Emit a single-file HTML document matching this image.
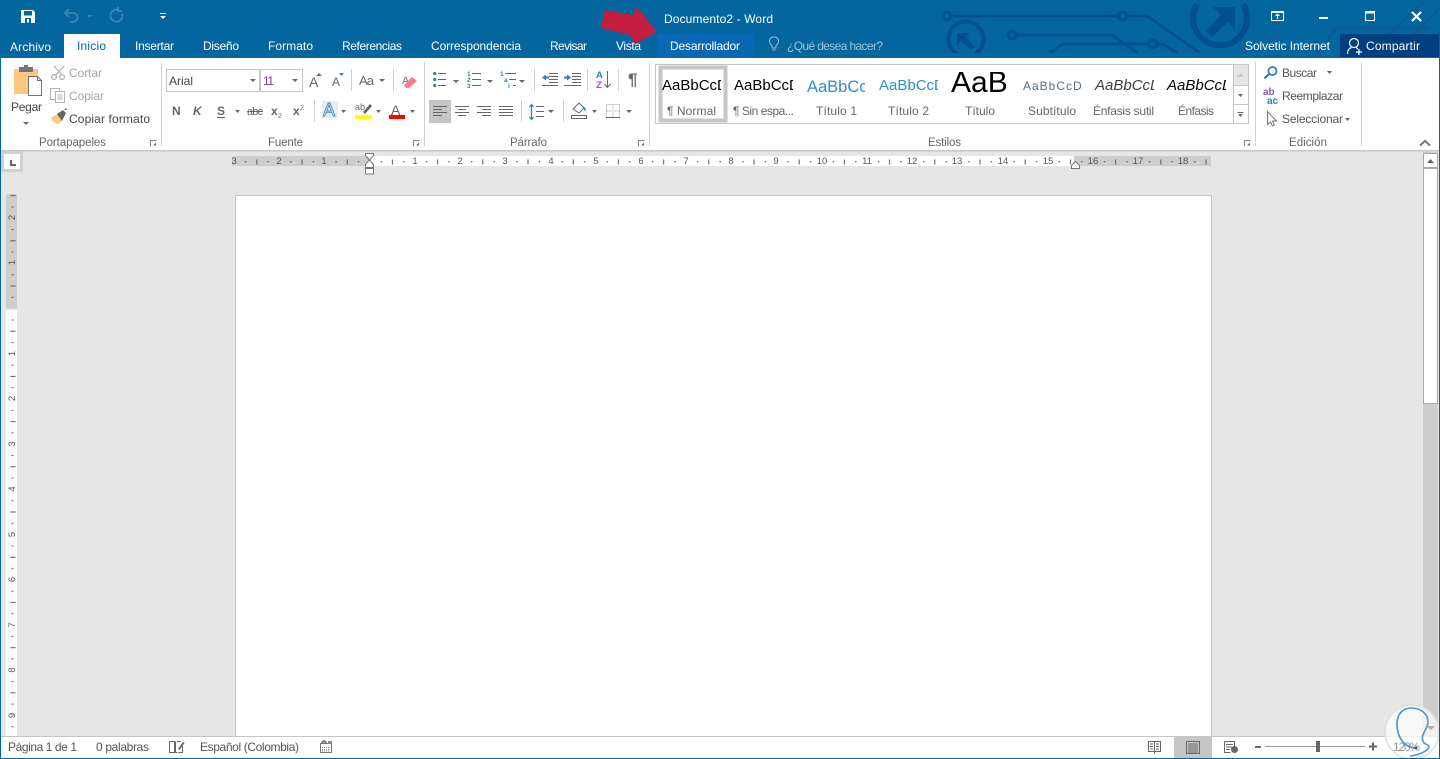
<!DOCTYPE html>
<html lang="es"><head><meta charset="utf-8"><title>Documento2 - Word</title>
<style>
html,body{margin:0;padding:0;width:1440px;height:759px;overflow:hidden;background:#e6e6e6}
svg{display:block;font-family:"Liberation Sans",sans-serif}
.t{font-size:12px;fill:#fff}
.r{font-size:12px;fill:#444}
.d{font-size:12px;fill:#a6a6a6}
.l{font-size:11.5px;fill:#666}
.s{font-size:12px;fill:#666}
.n{font-size:9.5px;fill:#555;text-anchor:middle}
.b{font-weight:bold;font-size:12px;fill:#666}
</style></head><body>
<svg width="1440" height="759" viewBox="0 0 1440 759" xmlns="http://www.w3.org/2000/svg">
<defs>
<pattern id="hr" patternUnits="userSpaceOnUse" x="369.7" y="156" width="45.2" height="10"><rect x="11" y="5" width="1.2" height="1.4" fill="#555"/><rect x="22.2" y="3.5" width="1" height="5" fill="#555"/><rect x="33.5" y="5" width="1.2" height="1.4" fill="#555"/></pattern>
<pattern id="vr" patternUnits="userSpaceOnUse" x="6" y="308.5" width="11" height="45.2"><rect x="5.5" y="11" width="2" height="1" fill="#555"/><rect x="4.5" y="22.2" width="5" height="1" fill="#555"/><rect x="5.5" y="33.5" width="2" height="1" fill="#555"/></pattern>
<clipPath id="tb"><rect x="900" y="1" width="540" height="52"/></clipPath>
<clipPath id="c1"><rect x="660" y="70" width="61" height="30"/></clipPath>
<clipPath id="c2"><rect x="732" y="70" width="61" height="30"/></clipPath>
<clipPath id="c3"><rect x="804" y="70" width="61" height="30"/></clipPath>
<clipPath id="c4"><rect x="876" y="70" width="62" height="30"/></clipPath>
<clipPath id="c5"><rect x="945" y="72" width="66" height="30"/></clipPath>
<clipPath id="c6"><rect x="1020" y="70" width="62" height="30"/></clipPath>
<clipPath id="c7"><rect x="1092" y="70" width="62" height="30"/></clipPath>
<clipPath id="c8"><rect x="1164" y="70" width="62" height="30"/></clipPath>
</defs>

<!-- base -->
<rect width="1440" height="759" fill="#e6e6e6"/>
<rect width="1440" height="58" fill="#03669f"/>

<!-- title pattern -->
<g clip-path="url(#tb)" fill="none" stroke="#014f8f" stroke-width="3">
<path d="M951 16H1119M1127 16H1147L1200 53"/><circle cx="947" cy="16" r="4"/><circle cx="1123" cy="16" r="4"/>
<path d="M1016 35H1112L1138 53"/><circle cx="1012" cy="35" r="4"/>
<path d="M1050 53L1063 44H1149M1157 44H1163L1177 53"/><circle cx="1153" cy="44" r="4"/>
<circle cx="966" cy="39" r="17.5" stroke-width="4"/>
<path d="M1197 4A27 27 0 1 0 1243 4" stroke-width="6"/>
<path d="M957 33H970L966 37L975 47L971 50L961 41L957 46Z" fill="#014f8f" stroke="none"/>
<path d="M1213 7H1235V29L1228 22L1212 37L1206 31L1221 15Z" fill="#014f8f" stroke="none"/>
<path d="M1317 53L1337 28H1430" stroke="#0b5b96"/><path d="M1383 40L1425 0M1408 40L1440 8" stroke="#0b5b96"/>
</g>

<!-- QAT -->
<path d="M21 10h12l2 2v11H21z" fill="#fff"/><rect x="24" y="11" width="8" height="4.5" fill="#03669f"/><rect x="25" y="18" width="6" height="5" fill="#03669f"/><rect x="27" y="19" width="2" height="3.5" fill="#fff"/>
<g fill="none" stroke="#3c86b6" stroke-width="1.8"><path d="M66 13h7a4.5 4.5 0 0 1 0 9h-3"/><path d="M69 9l-4 4 4 4"/><path d="M122 13.5a6 6 0 1 1-3.5-3.5"/><path d="M118 7v4h4"/></g>
<path d="M87 15h5l-2.500 2.500z" fill="#3c86b6"/>
<rect x="160" y="13" width="6" height="1" fill="#fff"/><path d="M160 16h6l-3 3z" fill="#fff"/>

<!-- tabs bg -->
<rect x="64" y="34" width="56" height="24" fill="#fff"/>
<rect x="657" y="34" width="97" height="24" fill="#0868b5"/>
<rect x="1340" y="34" width="99" height="23" fill="#003f7f"/>

<!-- arrow -->
<path d="M605 10L633 15L637 7L657 32L635 44L630 35L601 28Z" fill="#c41e3f"/>

<text x="664" y="23" class="t" textLength="109">Documento2 - Word</text>
<text x="10" y="51" class="t" textLength="41">Archivo</text>
<text x="77" y="50" class="t" style="fill:#03669f" textLength="29">Inicio</text>
<text x="135" y="50" class="t" textLength="39">Insertar</text>
<text x="203" y="50" class="t" textLength="36">Diseño</text>
<text x="268" y="50" class="t" textLength="45">Formato</text>
<text x="342" y="50" class="t" textLength="60">Referencias</text>
<text x="431" y="50" class="t" textLength="90">Correspondencia</text>
<text x="550" y="50" class="t" textLength="37">Revisar</text>
<text x="616" y="50" class="t" textLength="25">Vista</text>
<text x="670" y="50" class="t" textLength="70">Desarrollador</text>
<text x="787" y="50" class="t" style="fill:#9cc3dc" textLength="96">¿Qué desea hacer?</text>
<g fill="none" stroke="#9cc3dc" stroke-width="1"><path d="M772 48v-2.500c-4-3-3-8.500 2-8.500s6 5.500 2 8.500V48z"/><path d="M772.500 50h3"/></g>
<text x="1245" y="50" class="t" textLength="85">Solvetic Internet</text>
<text x="1366" y="50" class="t" textLength="54">Compartir</text>
<g fill="none" stroke="#fff" stroke-width="1.200"><circle cx="1354" cy="43" r="4.500"/><path d="M1347.500 54c0-4 2-6 4-6.500M1356 47.500l2 1.500"/><path d="M1356 52h6M1359 49v6"/></g>

<!-- window buttons -->
<g fill="none" stroke="#fff"><rect x="1271.500" y="11.500" width="12" height="9"/><path d="M1277.500 19v-4"/></g>
<path d="M1271 11h13v2h-13zM1275 16l2.500-2.500 2.500 2.500z" fill="#fff"/>
<rect x="1319" y="17" width="9" height="2" fill="#fff"/>
<rect x="1365.500" y="11.500" width="9" height="9" fill="none" stroke="#fff"/><rect x="1365" y="11" width="10" height="2.500" fill="#fff"/>
<path d="M1412 12l9 9M1421 12l-9 9" stroke="#fff" stroke-width="2.200"/>

<!-- ribbon -->
<rect y="58" x="1" width="1438" height="92" fill="#fff"/>
<rect y="150" x="1" width="1438" height="1.500" fill="#c6c6c6"/>
<g fill="#d2d2d2"><rect x="161" y="62" width="1" height="84"/><rect x="424" y="62" width="1" height="84"/><rect x="649" y="62" width="1" height="84"/><rect x="1255" y="62" width="1" height="84"/><rect x="1361" y="62" width="1" height="84"/>
<rect x="351" y="69" width="1" height="22"/><rect x="393" y="69" width="1" height="22"/><rect x="314" y="100" width="1" height="22"/>
<rect x="534" y="69" width="1" height="22"/><rect x="587" y="69" width="1" height="22"/><rect x="618" y="69" width="1" height="22"/>
<rect x="521" y="100" width="1" height="22"/><rect x="563" y="100" width="1" height="22"/></g>

<!-- portapapeles -->
<rect x="14" y="69" width="24" height="25" fill="#fcc77e"/>
<rect x="19" y="67" width="14" height="5" fill="#737373"/><rect x="24" y="65" width="4" height="3" fill="#737373"/>
<path d="M28.500 76.500h9l4 4v15h-13z" fill="#fff" stroke="#737373"/>
<path d="M37.500 76.500v4h4" fill="none" stroke="#737373"/>
<text x="11" y="111" class="r" textLength="31">Pegar</text>
<path d="M23 122h6l-3 3z" fill="#666"/>
<g fill="none" stroke="#b3b3b3" stroke-width="1.300"><path d="M54 66l8 9M64 66l-8 9"/><circle cx="54" cy="77" r="2.500"/><circle cx="62" cy="77" r="2.500"/></g>
<text x="69" y="77" class="d" textLength="33">Cortar</text>
<g fill="#fff" stroke="#b3b3b3"><rect x="50.500" y="88.500" width="9" height="11"/><rect x="55.500" y="91.500" width="9" height="11"/><path d="M57.500 95h5M57.500 97h5M57.500 99h5" fill="none"/></g>
<text x="69" y="100" class="d" textLength="35">Copiar</text>
<path d="M51 118l6-4 5 7-4 3c-3-1-6-3-7-6z" fill="#fcc77e"/><path d="M57 114l6-4 3 3-4 8z" fill="#666"/><path d="M64 110l2-2 1 2z" fill="#666"/>
<text x="69" y="123" class="r" textLength="81">Copiar formato</text>
<text x="39" y="146" class="l" textLength="67">Portapapeles</text>

<!-- launchers -->
<g fill="none" stroke="#888"><path d="M150.500 146.500v-6h6"/><path d="M413.500 146.500v-6h6"/><path d="M638.500 146.500v-6h6"/><path d="M1244.500 146.500v-6h6"/></g>
<path d="M153 145.500l3-3v3zM416 145.500l3-3v3zM641 145.500l3-3v3zM1247 145.500l3-3v3z" fill="#666"/>
<path d="M1420 145.500l5-4.500 5 4.500" fill="none" stroke="#777" stroke-width="2"/>

<!-- fuente -->
<rect x="166.500" y="69.500" width="93" height="22" fill="#fff" stroke="#c6c6c6"/>
<rect x="260.500" y="69.500" width="42" height="22" fill="#fff" stroke="#c6c6c6"/>
<text x="169" y="85" font-size="12" fill="#444" textLength="24">Arial</text>
<text x="263" y="85" font-size="12" fill="#7a3b82" textLength="11">11</text>
<path d="M250 79h6l-3 3zM292 79h6l-3 3z" fill="#666"/>
<text x="309" y="87" font-size="14" fill="#666">A</text><path d="M316 76l3-3 3 3z" fill="#2f7fb8"/>
<text x="332" y="86" font-size="12" fill="#666">A</text><path d="M339 73h5l-2.500 3z" fill="#2f7fb8"/>
<text x="359" y="85" font-size="13" fill="#666" textLength="15">Aa</text><path d="M379 79h6l-3 3z" fill="#666"/>
<text x="402" y="84" font-size="11" fill="#777">A</text><path d="M404 85l8-8 5 4-8 7h-3z" fill="#f0808c"/>
<text x="172" y="115" class="b">N</text>
<text x="193" y="115" class="b" style="font-style:italic">K</text>
<text x="217" y="115" class="b">S</text><rect x="217" y="117" width="8" height="1" fill="#666"/>
<path d="M235 110h5l-2.500 3z" fill="#666"/>
<text x="247" y="115" font-size="11" fill="#666" textLength="16">abc</text><rect x="247" y="111" width="16" height="1" fill="#666"/>
<text x="271" y="115" class="b">x</text><text x="278" y="118" font-size="7" fill="#2f7fb8">2</text>
<text x="293" y="115" class="b">x</text><text x="300" y="110" font-size="7" fill="#2f7fb8">2</text>
<rect x="322" y="101" width="16" height="17" fill="#e6eef5"/>
<text x="323" y="116" font-size="18" fill="#fff" stroke="#3a87bf" stroke-width=".9">A</text>
<path d="M341 110h5l-2.500 3z" fill="#666"/>
<text x="355" y="110" font-size="9" fill="#666">ab</text><path d="M363 112l7-8 2 2-7 8z" fill="#666"/><rect x="355" y="115" width="17" height="4" fill="#ff0"/>
<path d="M376 110h5l-2.500 3z" fill="#666"/>
<text x="391" y="115" font-size="14" fill="#666">A</text><rect x="389" y="115" width="16" height="4" fill="#f00"/>
<path d="M410 110h5l-2.500 3z" fill="#666"/>
<text x="268" y="146" class="l" textLength="35">Fuente</text>

<!-- parrafo row 1 -->
<g fill="#2f7fb8"><circle cx="434.700" cy="73.500" r="1.600"/><circle cx="434.700" cy="79.500" r="1.600"/><circle cx="434.700" cy="85.500" r="1.600"/></g>
<g fill="none" stroke="#666"><path d="M438 73.500h8M438 79.500h8M438 85.500h8"/><path d="M472 73.500h9M472 79.500h9M472 85.500h9"/><path d="M505 73.500h11M509 79.500h7M513 85.500h3"/>
<path d="M549 73.500h9M549 76.500h9M549 79.500h9M549 82.500h9M542 85.500h16"/><path d="M572 73.500h9M572 76.500h9M572 79.500h9M572 82.500h9M564 85.500h17"/></g>
<g font-size="6.500" fill="#2f7fb8" font-weight="bold"><text x="467" y="76">1</text><text x="467" y="82">2</text><text x="467" y="88">3</text><text x="500" y="76">1</text><text x="504" y="82">a</text><text x="508" y="88">i</text></g>
<path d="M453 80h6l-3 3zM487 80h6l-3 3zM519 80h6l-3 3z" fill="#666"/>
<path d="M542 77.500l4-3v2h3v2h-3v2z" fill="#2f7fb8"/><path d="M571 77.500l-4-3v2h-3v2h3v2z" fill="#2f7fb8"/>
<text x="596" y="78" font-size="9.500" font-weight="bold" fill="#2f7fb8">A</text><text x="596" y="88" font-size="9.500" font-weight="bold" fill="#9b59b6">Z</text>
<path d="M607.500 71v16M604.500 84l3 3.500 3-3.500" fill="none" stroke="#666"/>
<text x="628" y="85" font-size="17" font-weight="bold" fill="#666">¶</text>

<!-- parrafo row 2 -->
<rect x="429" y="100" width="22" height="23" fill="#c6c6c6"/>
<g fill="none" stroke="#666"><path d="M433 106.500h14M433 109.500h9M433 112.500h14M433 115.500h9"/>
<path d="M455 106.500h14M458 109.500h8M455 112.500h14M458 115.500h8"/>
<path d="M477 106.500h14M482 109.500h9M477 112.500h14M482 115.500h9"/>
<path d="M499 106.500h14M499 109.500h14M499 112.500h14M499 115.500h14"/>
<path d="M536 106.500h8M536 111.500h8M536 116.500h8"/></g>
<path d="M531.500 105v14M529.500 107l2-2.500 2 2.500M529.500 117l2 2.500 2-2.500" fill="none" stroke="#2f7fb8" stroke-width="1.200"/>
<path d="M548 110h6l-3 3z" fill="#666"/>
<path d="M573 109l6-6 5 5-5 5z" fill="#fff" stroke="#666"/><path d="M583 106l3 3-1 3z" fill="#2f7fb8"/><rect x="571.500" y="115.500" width="15" height="3" fill="#fff" stroke="#666"/>
<path d="M592 110h5l-2.500 3zM626 110h6l-3 3z" fill="#666"/>
<path d="M606.500 104.500h13v13h-13zM613 104.500v13M606.500 111h13" fill="none" stroke="#999" stroke-dasharray="1 1"/><path d="M606 117.500h14" stroke="#666"/>
<text x="510" y="146" class="l" textLength="37">Párrafo</text>

<!-- estilos -->
<rect x="655.500" y="64.500" width="593" height="59" fill="#fff" stroke="#c6c6c6"/>
<rect x="660.500" y="67.500" width="65" height="53" fill="#fff" stroke="#c6c6c6" stroke-width="4"/>
<text x="662" y="90" font-size="15" fill="#000" clip-path="url(#c1)">AaBbCcDd</text>
<text x="734" y="90" font-size="15" fill="#000" clip-path="url(#c2)">AaBbCcDd</text>
<text x="807" y="92" font-size="16.500" fill="#2e8ed0" clip-path="url(#c3)">AaBbCcDd</text>
<text x="879" y="90" font-size="15" fill="#2e8ed0" clip-path="url(#c4)">AaBbCcDd</text>
<text x="951" y="92" font-size="30" fill="#000" clip-path="url(#c5)">AaB</text>
<text x="1023" y="90" font-size="12" letter-spacing="1" fill="#5a6f80" clip-path="url(#c6)">AaBbCcDd</text>
<text x="1095" y="90" font-size="15" fill="#404040" font-style="italic" clip-path="url(#c7)">AaBbCcDd</text>
<text x="1167" y="90" font-size="15" fill="#000" font-style="italic" clip-path="url(#c8)">AaBbCcDd</text>
<text x="667" y="115" class="s" textLength="49">¶ Normal</text>
<text x="733" y="115" class="s" textLength="61">¶ Sin espa...</text>
<text x="816" y="115" class="s" textLength="41">Título 1</text>
<text x="888" y="115" class="s" textLength="41">Título 2</text>
<text x="965" y="115" class="s" textLength="30">Título</text>
<text x="1028" y="115" class="s" textLength="48">Subtítulo</text>
<text x="1093" y="115" class="s" textLength="61">Énfasis sutil</text>
<text x="1178" y="115" class="s" textLength="36">Énfasis</text>
<text x="928" y="146" class="l" textLength="33">Estilos</text>
<rect x="1233" y="65" width="15" height="20" fill="#e6e6e6"/>
<path d="M1233.500 64.500v59M1233.500 85.500h15M1233.500 104.500h15" fill="none" stroke="#c6c6c6"/>
<path d="M1237 77l3.500-4 3.500 4z" fill="#c6c6c6"/><path d="M1238 94h5l-2.500 3z" fill="#666"/><path d="M1237.500 112.500h6" stroke="#666"/><path d="M1238 114h5l-2.500 3z" fill="#666"/>

<!-- edicion -->
<circle cx="1272.500" cy="71" r="4" fill="none" stroke="#2f7fb8" stroke-width="1.800"/><path d="M1269 74l-4.500 4.500" stroke="#2f7fb8" stroke-width="2.200"/>
<text x="1282" y="77" class="r" style="fill:#555" textLength="35">Buscar</text><path d="M1327 71h5l-2.500 3z" fill="#666"/>
<text x="1263" y="95" font-size="10" font-weight="bold" fill="#8e5aa8">ab</text><text x="1267" y="104" font-size="10" font-weight="bold" fill="#2f7fb8">ac</text>
<text x="1282" y="100" class="r" style="fill:#555" textLength="61">Reemplazar</text>
<path d="M1267.500 111.500v13l3-2.500 2 4 2-1-2-4h4z" fill="#fff" stroke="#777"/>
<text x="1282" y="123" class="r" style="fill:#555" textLength="61">Seleccionar</text><path d="M1345 118h5l-2.500 3z" fill="#666"/>
<text x="1289" y="146" class="l" textLength="38">Edición</text>

<!-- ruler corner -->
<rect x="1" y="151" width="22" height="21" fill="#d0d0d0"/><rect x="4" y="154" width="16" height="15" fill="#fff"/><path d="M10 160h2v4h4v2h-6z" fill="#666"/>

<!-- h ruler -->
<rect x="232" y="156" width="979" height="10" fill="#cdcdcd"/><rect x="369" y="156" width="705" height="10" fill="#fff"/>
<rect x="232" y="156" width="979" height="10" fill="url(#hr)"/>
<text class="n" x="234" y="164">3</text><text class="n" x="279" y="164">2</text><text class="n" x="324" y="164">1</text><text class="n" x="415" y="164">1</text><text class="n" x="460" y="164">2</text><text class="n" x="505" y="164">3</text><text class="n" x="551" y="164">4</text><text class="n" x="596" y="164">5</text><text class="n" x="641" y="164">6</text><text class="n" x="686" y="164">7</text><text class="n" x="731" y="164">8</text><text class="n" x="776" y="164">9</text><text class="n" x="822" y="164">10</text><text class="n" x="867" y="164">11</text><text class="n" x="912" y="164">12</text><text class="n" x="957" y="164">13</text><text class="n" x="1003" y="164">14</text><text class="n" x="1048" y="164">15</text><text class="n" x="1093" y="164">16</text><text class="n" x="1138" y="164">17</text><text class="n" x="1183" y="164">18</text>
<path d="M365.500 153.500h8v2l-4 4.500 4 4.500v3h-8v-3l4-4.500-4-4.500z" fill="#fff" stroke="#777"/><rect x="365.500" y="168.500" width="8" height="5.500" fill="#fff" stroke="#777"/>
<path d="M1071.500 168.500v-3l4-4 4 4v3z" fill="#fff" stroke="#777"/>

<!-- v ruler -->
<rect x="6" y="194" width="11" height="115" fill="#cdcdcd"/><rect x="6" y="310" width="11" height="426" fill="#fff"/>
<rect x="6" y="194" width="11" height="542" fill="url(#vr)"/>
<rect x="6" y="308.500" width="11" height="1.500" fill="#e6e6e6"/>
<g font-size="9.500" fill="#555" text-anchor="middle">
<text transform="translate(15,217.500) rotate(-90)">2</text><text transform="translate(15,262.500) rotate(-90)">1</text><text transform="translate(15,353.500) rotate(-90)">1</text><text transform="translate(15,398.500) rotate(-90)">2</text><text transform="translate(15,444) rotate(-90)">3</text><text transform="translate(15,489) rotate(-90)">4</text><text transform="translate(15,534.500) rotate(-90)">5</text><text transform="translate(15,579.500) rotate(-90)">6</text><text transform="translate(15,625) rotate(-90)">7</text><text transform="translate(15,670) rotate(-90)">8</text><text transform="translate(15,715.500) rotate(-90)">9</text>
</g>

<!-- page -->
<rect x="235.500" y="195.500" width="976" height="560" fill="#fff" stroke="#c6c6c6"/>

<!-- scrollbar -->
<rect x="1423" y="152" width="15" height="585" fill="#cdcdcd"/>
<rect x="1423.500" y="153.500" width="14" height="14" fill="#fff" stroke="#aaa"/>
<path d="M1427 163l3.500-4 3.500 4z" fill="#666"/>
<rect x="1423.500" y="168.500" width="14" height="235" fill="#fff" stroke="#aaa"/>

<!-- status -->
<rect x="1" y="736" width="1438" height="22" fill="#fff"/>
<rect x="1" y="736" width="1438" height="1" fill="#c6c6c6"/>
<text x="8" y="751" class="s" style="fill:#555" textLength="69">Página 1 de 1</text>
<text x="96" y="751" class="s" style="fill:#555" textLength="53">0 palabras</text>
<path d="M169.500 741.500h5v11h-5zM177.500 752.500h-2v-11M177 741.500h4M182.500 746v6.500h-4" fill="none" stroke="#666"/><path d="M178 749l5-7 1.500 1-5 7z" fill="#666"/>
<text x="200" y="751" class="s" style="fill:#555" textLength="99">Español (Colombia)</text>
<circle cx="324" cy="743" r="3" fill="#888"/><rect x="320.500" y="743.500" width="11" height="9" fill="#fff" stroke="#777"/><rect x="328" y="741" width="4" height="3" fill="#888"/><path d="M322 747.500h8M322 749.500h8M322 751h8" stroke="#888" stroke-dasharray="1 1"/>
<rect x="1174" y="737" width="38" height="21" fill="#c6c6c6"/>
<path d="M1148.500 741.500h12v10h-12zM1154.500 741.500v12M1150 744h3M1150 746.500h3M1150 749h3M1156 744h3M1156 746.500h3M1156 749h3" fill="none" stroke="#666"/>
<path d="M1186.500 741.500h13v12h-13z" fill="none" stroke="#666"/><path d="M1188 744h10M1188 746h10M1188 748h10M1188 750h10M1188 752h10" stroke="#666"/>
<path d="M1224.500 741.500h10v5M1224.500 741.500v11h6M1226 744.500h7M1226 747h6M1226 749.500h4" fill="none" stroke="#666"/><circle cx="1234.500" cy="749.500" r="3.500" fill="#666"/>
<rect x="1255" y="746" width="6" height="2" fill="#666"/>
<rect x="1265" y="746" width="100" height="1" fill="#999"/>
<rect x="1316" y="741" width="4" height="11" fill="#666"/>
<path d="M1369 746.500h8M1373 742.500v8" stroke="#666" stroke-width="2"/>

<!-- watermark -->
<circle cx="1412" cy="732" r="27" fill="#fff" fill-opacity=".7" stroke="#ddd" stroke-opacity=".8" stroke-width="2"/>
<text x="1393" y="751" class="s" style="fill:#999" textLength="27">120%</text>
<path d="M1427 726h8l-4 4z" fill="#aaa"/>
<path d="M1416 748C1405 748 1397 738 1397 724C1397 713 1404 708 1411 708C1420 708 1428 713 1428 722C1428 729 1420 735 1423 741C1424 745 1429 744 1429 747C1427 752 1418 755 1410 756" fill="none" stroke="#4a97c9" stroke-width="1.600"/>
<circle cx="1416" cy="748" r="1.500" fill="#1f5f96"/>

<!-- window frame -->
<rect x="0" y="58" width="1" height="701" fill="#03669f"/><rect x="1439" y="0" width="1" height="759" fill="#03669f"/><rect x="0" y="758" width="1440" height="1" fill="#03669f"/>
</svg>
</body></html>
